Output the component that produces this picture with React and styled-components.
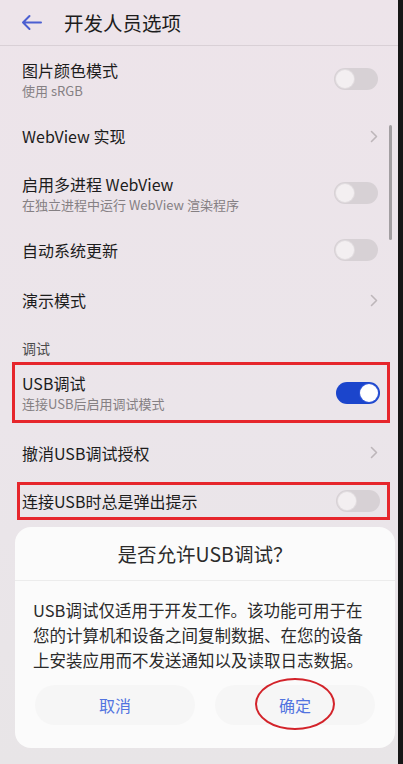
import React from 'react'
import styled, { createGlobalStyle } from 'styled-components'

const GlobalStyle = createGlobalStyle`
  html, body {
    margin: 0;
    padding: 0;
    background: #1a1a1a;
  }
  body {
    font-family: "Noto Sans CJK SC", "Noto Sans", sans-serif;
  }
`;

const settings = [
  { title: '图片颜色模式', sub: '使用 sRGB', kind: 'toggle', h: 66 },
  { title: 'WebView 实现', kind: 'link', h: 48 },
  { title: '启用多进程 WebView', sub: '在独立进程中运行 WebView 渲染程序', kind: 'toggle', h: 66 },
  { title: '自动系统更新', kind: 'toggle', h: 48 },
  { title: '演示模式', kind: 'link', h: 52 },
  { section: '调试', h: 36 },
  { title: 'USB调试', sub: '连接USB后启用调试模式', kind: 'toggle', on: true, h: 61, mark: 12 },
  { title: '撤消USB调试授权', kind: 'link', h: 59 },
  { title: '连接USB时总是弹出提示', kind: 'toggle', h: 38, mark: 17 },
];

const notice = [
  'USB调试仅适用于开发工作。该功能可用于在',
  '您的计算机和设备之间复制数据、在您的设备',
  '上安装应用而不发送通知以及读取日志数据。',
];

const BackArrow = () => (
  <svg width="21" height="17" viewBox="0 0 21 17" fill="none">
    <path d="M20 8.5H2M8.5 2L2 8.5L8.5 15" stroke="#4b5fd1" strokeWidth="2" strokeLinecap="round" strokeLinejoin="round" />
  </svg>
);

const Chevron = () => (
  <svg width="8" height="13" viewBox="0 0 8 13" fill="none">
    <path d="M1.5 1.5L6.5 6.5L1.5 11.5" stroke="#bdb6ba" strokeWidth="1.6" strokeLinecap="round" strokeLinejoin="round" />
  </svg>
);

const App = () => {
  return (
    <>
      <GlobalStyle />
      <Frame>
        <Screen>
          <Header>
            <BackArrow />
            <HeaderTitle>开发人员选项</HeaderTitle>
          </Header>
          <List>
            {settings.map((item, i) =>
              item.section ? (
                <Section key={i} $h={item.h}>{item.section}</Section>
              ) : (
                <Row key={i} $h={item.h} $mark={item.mark}>
                  <Texts>
                    <Title>{item.title}</Title>
                    {item.sub && <Sub>{item.sub}</Sub>}
                  </Texts>
                  {item.kind === 'toggle' ? <Toggle $on={item.on} /> : <Chevron />}
                </Row>
              )
            )}
          </List>
          <ScrollThumb />
          <Dialog>
            <DialogTitle>是否允许USB调试？</DialogTitle>
            <DialogBody>
              {notice.map((line) => (
                <Line key={line}>{line}</Line>
              ))}
            </DialogBody>
            <Buttons>
              <DialogButton>取消</DialogButton>
              <DialogButton>
                确定
                <Circle />
              </DialogButton>
            </Buttons>
          </Dialog>
        </Screen>
        <Bezel />
      </Frame>
    </>
  )
}

const Frame = styled.div`
  display: flex;
  width: 403px;
  height: 764px;
  overflow: hidden;
`;

const Screen = styled.div`
  position: relative;
  flex: 1;
  background: linear-gradient(#ede4ea, #ebe5ea 55%, #e8e5e7);
  color: #1f1f1f;
`;

const Bezel = styled.div`
  width: 5px;
  background: #161616;
`;

const Header = styled.header`
  height: 45px;
  display: flex;
  align-items: center;
  gap: 22px;
  padding-left: 21px;
  border-bottom: 1px solid #d9d0d6;
`;

const HeaderTitle = styled.h1`
  margin: 0;
  font-size: 19.5px;
  font-weight: 400;
  color: #1d1d1d;
`;

const List = styled.div`
  display: flex;
  flex-direction: column;
`;

const Row = styled.div`
  box-sizing: border-box;
  height: ${({ $h }) => $h}px;
  display: flex;
  align-items: center;
  justify-content: space-between;
  ${({ $mark }) => $mark
    ? `
      margin: 0 8px 0 ${$mark}px;
      border: 3px solid #e6262c;
      padding: 0 7px 0 ${22 - $mark - 3}px;
    `
    : `
      padding: 0 20px 0 22px;
    `}
`;

const Section = styled.div`
  box-sizing: border-box;
  height: ${({ $h }) => $h}px;
  display: flex;
  align-items: flex-end;
  padding: 0 0 4px 22px;
  font-size: 14px;
  color: #4a4a4a;
`;

const Texts = styled.div`
  display: flex;
  flex-direction: column;
  gap: 2px;
`;

const Title = styled.div`
  font-size: 16px;
  line-height: 20px;
  color: #1c1c1c;
`;

const Sub = styled.div`
  font-size: 13px;
  line-height: 17px;
  color: #858083;
`;

const Toggle = styled.div`
  position: relative;
  width: 44px;
  height: 22px;
  border-radius: 11px;
  background: ${({ $on }) => ($on ? '#1b45cc' : '#d7d1d5')};
  flex-shrink: 0;
  &::after {
    content: '';
    position: absolute;
    top: 2px;
    left: ${({ $on }) => ($on ? '24px' : '2px')};
    width: 18px;
    height: 18px;
    border-radius: 50%;
    background: ${({ $on }) => ($on ? '#ffffff' : '#f3eff1')};
    box-shadow: 0 0 0 1px ${({ $on }) => ($on ? '#3358d8' : '#e2dde0')};
  }
`;

const ScrollThumb = styled.div`
  position: absolute;
  right: 6px;
  top: 125px;
  width: 3px;
  height: 115px;
  border-radius: 2px;
  background: #a29ea1;
`;

const Dialog = styled.div`
  position: absolute;
  left: 15px;
  right: 3px;
  top: 527px;
  height: 221px;
  display: flex;
  flex-direction: column;
  background: #fbfbfb;
  border-radius: 16px;
`;

const DialogTitle = styled.div`
  height: 53px;
  display: flex;
  align-items: center;
  justify-content: center;
  border-bottom: 1px solid #ececec;
  font-size: 19.5px;
  color: #2b2b2b;
`;

const DialogBody = styled.div`
  padding: 17px 18px 0;
`;

const Line = styled.div`
  font-size: 16.5px;
  line-height: 25px;
  color: #2a2a2a;
  white-space: nowrap;
`;

const Buttons = styled.div`
  display: grid;
  grid-template-columns: 1fr 1fr;
  gap: 20px;
  padding: 12px 20px 23px;
`;

const DialogButton = styled.div`
  position: relative;
  height: 40px;
  display: flex;
  align-items: center;
  justify-content: center;
  border-radius: 20px;
  background: #f6f6f6;
  font-size: 16px;
  color: #5274e0;
`;

const Circle = styled.span`
  position: absolute;
  left: 40px;
  top: -7px;
  width: 76px;
  height: 48px;
  border: 2px solid #d3232a;
  border-radius: 50%;
`;

export default App;
